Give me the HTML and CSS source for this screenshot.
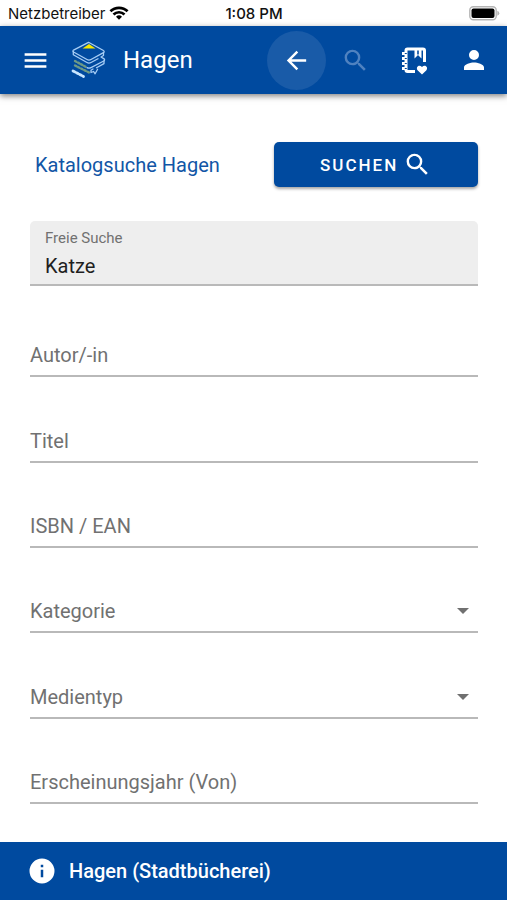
FILE: index.html
```html
<!DOCTYPE html>
<html lang="de">
<head>
<meta charset="utf-8">
<meta name="viewport" content="width=device-width, initial-scale=1">
<title>Katalogsuche Hagen</title>
<link rel="stylesheet" href="styles.css">
</head>
<body>
<div class="status">
  <div class="carrier">
    <span>Netzbetreiber</span>
    <svg width="20" height="14" viewBox="0 0 20 14" fill="none" stroke="#000" stroke-width="2.7" aria-hidden="true">
      <path d="M1.4 5.3a12.3 12.3 0 0 1 17.2 0"/>
      <path d="M4.5 8.5a7.8 7.8 0 0 1 11 0"/>
      <path d="M10 13.8l-3-3a4.3 4.3 0 0 1 6 0z" fill="#000" stroke="none"/>
    </svg>
  </div>
  <time class="clock">1:08 PM</time>
  <svg class="battery" width="31" height="15" viewBox="0 0 31 15" aria-hidden="true">
    <rect x=".8" y=".8" width="26.4" height="13" rx="3.5" fill="#fff" stroke="#b5b5b5" stroke-width="1.4"/>
    <rect x="2.5" y="2.5" width="23" height="9.6" rx="2" fill="#000"/>
    <path d="M28.3 4.8q2 .7 2 2.5t-2 2.5z" fill="#b5b5b5"/>
  </svg>
</div>

<header class="bar">
  <button class="icon-button menu" type="button" aria-label="Menü">
    <svg width="29" height="29" viewBox="0 0 24 24" fill="#fff"><path d="M3 18h18v-2H3v2zm0-5h18v-2H3v2zm0-7v2h18V6H3z"/></svg>
  </button>
  <svg class="logo" width="36" height="38" viewBox="0 0 36 38" fill="none" stroke="#a6cdf5" stroke-width="1.3" stroke-linejoin="round" stroke-linecap="round" aria-hidden="true">
    <path d="M11.500 7.500L18 3l6.500 4.500z" fill="#f6e600" stroke="none"/>
    <path d="M17.500 1.300L32 9.200c1.600 1 1.600 1.900 0 2.700L20 18.500c-1.500.8-2.600.8-4 0L3 11.300c-1.400-.9-1.400-1.700 0-2.500z"/>
    <path d="M2.300 10.500v3.300L16 21.500c1.400.8 2.500.8 4 0l7-3.800"/>
    <path d="M32.500 12v2.500L30 16l2.700 1.600c1.200.8 1.200 1.600 0 2.400L20 26.600c-1.400.7-2.600.7-4 0"/>
    <path d="M33 20v2.600l-7.500 4.200M22 28l-2 1.200v2.300l2.600-1 1.500 2.300 2.500-4.500"/>
    <path d="M4 20l12 6.500M4 24.500l14 7" stroke="#6d9a86" stroke-width="2.400" stroke-dasharray="1.500 2"/>
    <path d="M2 30l10.500 5.500" stroke="#c7e5ff" stroke-width="2.800" stroke-dasharray="1.800 2"/>
  </svg>
  <h1>Hagen</h1>
  <nav class="actions" aria-label="Aktionen">
    <button class="icon-button active" type="button" aria-label="Zurück">
      <svg width="29" height="29" viewBox="0 0 24 24" fill="#fff"><path d="M20 11H7.830l5.590-5.590L12 4l-8 8 8 8 1.410-1.410L7.830 13H20v-2z"/></svg>
    </button>
    <button class="icon-button" type="button" aria-label="Suche" disabled>
      <svg width="29" height="29" viewBox="0 0 24 24" fill="#4f82c0"><path d="M15.500 14h-.79l-.28-.27A6.471 6.471 0 0 0 16 9.500 6.500 6.500 0 1 0 9.500 16c1.610 0 3.090-.59 4.230-1.570l.27.28v.79l5 4.990L20.490 19l-4.990-5zm-6 0C7.010 14 5 11.990 5 9.500S7.010 5 9.500 5 14 7.010 14 9.500 11.990 14 9.500 14z"/></svg>
    </button>
    <button class="icon-button" type="button" aria-label="Merkliste">
      <svg width="29" height="29" viewBox="0 0 29 29" fill="none" stroke="#fff" stroke-width="2.600">
        <path d="M15 25.500H7.500q-1.500 0-1.500-1.500V4.500Q6 3 7.500 3H23q1.500 0 1.500 1.500V16" stroke-width="3"/>
        <path d="M14.500 3h7v9.500l-3.500-3.500-3.500 3.500z" fill="#fff" stroke="none"/>
        <path d="M18 4.500v4" stroke="#004a9f" stroke-width="1.600"/>
        <path d="M2 7.500h4M2 12.500h4M2 17.500h4M2 22.500h4" stroke-width="3"/>
        <path d="M4.800 7.500h2M4.800 12.500h2M4.800 17.500h2M4.800 22.500h2" stroke="#004a9f" stroke-width="1.200"/>
        <path d="M22 28.500l-4.200-4c-2.600-3 .9-6.600 4.200-3.600 3.300-3 6.800.6 4.200 3.600z" fill="#fff" stroke="none"/>
      </svg>
    </button>
    <button class="icon-button" type="button" aria-label="Konto">
      <svg width="30" height="30" viewBox="0 0 24 24" fill="#fff"><path d="M12 12a4 4 0 1 0 0-8 4 4 0 0 0 0 8zm0 2c-2.670 0-8 1.340-8 4v2h16v-2c0-2.660-5.330-4-8-4z"/></svg>
    </button>
  </nav>
</header>

<main>
  <form>
    <div class="heading">
      <h2>Katalogsuche Hagen</h2>
      <button class="submit" type="button">
        <span>SUCHEN</span>
        <svg width="29" height="29" viewBox="0 0 24 24" fill="#fff" aria-hidden="true"><path d="M15.500 14h-.79l-.28-.27A6.471 6.471 0 0 0 16 9.500 6.500 6.500 0 1 0 9.500 16c1.610 0 3.090-.59 4.230-1.570l.27.28v.79l5 4.990L20.490 19l-4.990-5zm-6 0C7.010 14 5 11.990 5 9.500S7.010 5 9.500 5 14 7.010 14 9.500 11.990 14 9.500 14z"/></svg>
      </button>
    </div>
    <div class="filled">
      <label for="free">Freie Suche</label>
      <input id="free" type="text" value="Katze">
    </div>
    <div class="fields">
      <div class="field"><label for="author">Autor/-in</label><input id="author" type="text"></div>
      <div class="field"><label for="title">Titel</label><input id="title" type="text"></div>
      <div class="field"><label for="isbn">ISBN / EAN</label><input id="isbn" type="text"></div>
      <div class="field"><label for="category">Kategorie</label><select id="category"><option></option></select><svg class="arrow" width="12" height="6" viewBox="0 0 12 6" aria-hidden="true"><path d="M0 0h12L6 6z" fill="#707070"/></svg></div>
      <div class="field"><label for="media">Medientyp</label><select id="media"><option></option></select><svg class="arrow" width="12" height="6" viewBox="0 0 12 6" aria-hidden="true"><path d="M0 0h12L6 6z" fill="#707070"/></svg></div>
      <div class="field"><label for="year">Erscheinungsjahr (Von)</label><input id="year" type="text"></div>
    </div>
  </form>
</main>

<footer>
  <svg width="30" height="30" viewBox="0 0 24 24" fill="#fff" aria-hidden="true"><path d="M12 2a10 10 0 1 0 0 20 10 10 0 0 0 0-20zm1 15h-2v-6h2v6zm0-8h-2V7h2v2z"/></svg>
  <span>Hagen (Stadtbücherei)</span>
</footer>
</body>
</html>
```
FILE: styles.css
```css
* { box-sizing: border-box; }

body {
  margin: 0;
  min-height: 100vh;
  display: flex;
  flex-direction: column;
  background: #fff;
  color: #1f1f1f;
  font-family: Roboto, sans-serif;
  font-size: 20px;
}

h1, h2 { margin: 0; font-weight: 400; }

button, input, select {
  font: inherit;
  border: 0;
  border-radius: 0;
  background: none;
  margin: 0;
  padding: 0;
}

svg { display: block; flex: none; }

.status {
  display: grid;
  grid-template-columns: 1fr auto 1fr;
  align-items: center;
  height: 26px;
  padding: 0 7px 0 8px;
  font-family: Inter, sans-serif;
  font-size: 15px;
  color: #111;
}

.carrier { display: flex; align-items: center; gap: 4px; }
.clock { font-weight: 500; }
.battery { justify-self: end; }

.bar {
  display: flex;
  align-items: center;
  height: 68px;
  padding: 0 4px 0 6px;
  background: #004a9f;
  color: #fff;
  box-shadow: 0 2px 6px rgba(0, 0, 0, .5);
}

.bar h1 { margin-left: 16px; font-size: 24px; }
.logo { margin-left: 6px; }

.actions { display: flex; margin-left: auto; }

.icon-button {
  display: grid;
  place-items: center;
  width: 59px;
  height: 59px;
  border-radius: 50%;
}

.active { background: #195ba8; }

main, form { display: flex; flex-direction: column; flex: 1; }
main { padding: 48px 29px 38px 30px; }

.heading {
  display: flex;
  align-items: center;
  justify-content: space-between;
  padding-left: 5px;
}

.heading h2 { font-size: 20px; color: #1256a6; }

.submit {
  display: flex;
  align-items: center;
  justify-content: center;
  gap: 5px;
  width: 46%;
  height: 45px;
  border-radius: 5px;
  background: #004a9f;
  color: #fff;
  font-size: 17px;
  font-weight: 500;
  letter-spacing: 2px;
  box-shadow: 0 2px 3px rgba(0, 0, 0, .35);
}

.filled {
  display: flex;
  flex-direction: column;
  margin-top: 34px;
  height: 65px;
  padding: 8px 15px 0;
  border-radius: 5px 5px 0 0;
  border-bottom: 2px solid #b9b9b9;
  background: #eee;
}

.filled label { font-size: 15px; line-height: 18px; color: #717171; }
.filled input { height: 40px; color: #1f1f1f; }

.fields {
  display: grid;
  grid-auto-rows: 1fr;
  flex: 1;
  margin-top: 6px;
}

.field {
  display: grid;
  align-content: end;
  align-items: center;
  border-bottom: 2px solid #b9b9b9;
}

.field > * { grid-area: 1 / 1; }
.field label { color: #717171; pointer-events: none; }
.field input, .field select { width: 100%; height: 40px; appearance: none; }
.arrow { justify-self: end; margin-right: 9px; pointer-events: none; }

footer {
  display: flex;
  align-items: center;
  gap: 12px;
  height: 58px;
  padding: 0 27px;
  background: #004a9f;
  color: #fff;
  font-weight: 500;
}
```
